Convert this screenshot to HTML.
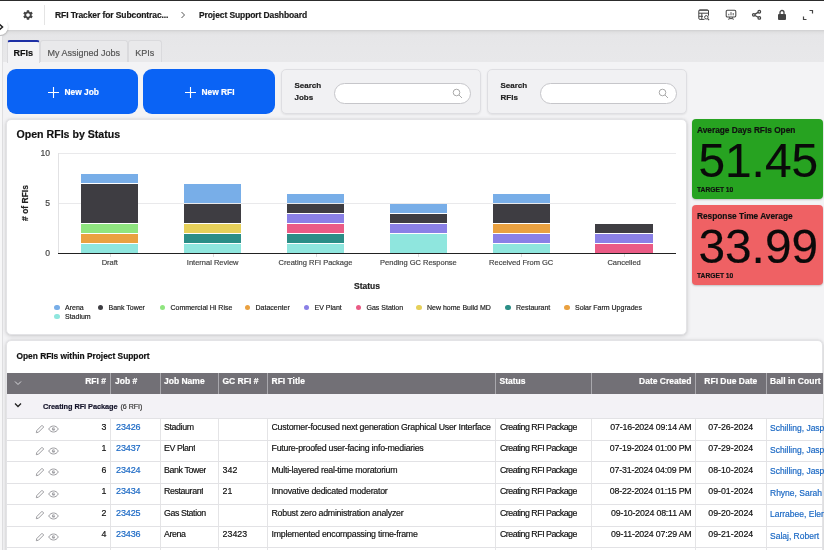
<!DOCTYPE html>
<html><head><meta charset="utf-8">
<style>
*{box-sizing:border-box;margin:0;padding:0}
html,body{width:824px;height:550px;overflow:hidden}
body{will-change:transform;-webkit-font-smoothing:antialiased;-webkit-text-stroke:.18px}
body{font-family:"Liberation Sans",sans-serif;background:#f3f3f5;position:relative;color:#111}
.abs{position:absolute}
#topbar{left:0;top:0;width:824px;height:30px;background:#fff;border-top:1px solid #3a3a3a}
.tb{position:absolute;font-size:8.5px;font-weight:bold;color:#1a1a1a;top:9.5px;white-space:nowrap;letter-spacing:-.1px}
#band{left:0;top:30px;width:824px;height:31.7px;background:linear-gradient(#cfcfd1 0,#dfdfe0 2px,#e6e6e8 5px,#e8e8ea 100%)}
.tab{position:absolute;top:40.3px;height:21.4px;font-size:9px;line-height:24.5px;overflow:hidden;text-align:center;color:#555;background:#e9e9eb;border:1px solid #dadadd;border-bottom:none;border-radius:3px 3px 0 0}
.tab.act{background:#f3f3f5;color:#111;border-top:2px solid #1d2fa5;font-weight:bold;line-height:22.5px;height:23px}
.btn{position:absolute;top:69.4px;height:44.2px;background:#0a63f5;border-radius:9px;color:#fff;font-size:8.4px;font-weight:bold;line-height:45.5px;text-align:left;white-space:nowrap}
.panel{position:absolute;top:69px;height:44.5px;background:#f1f1f3;border:1px solid #dedee2;border-radius:5px;box-shadow:0 1px 2px rgba(0,0,0,.08)}
.panel .lbl{position:absolute;left:13px;top:10px;font-size:8px;font-weight:bold;line-height:12px;color:#222}
.panel .inp{position:absolute;left:52px;top:13px;width:137px;height:21px;border:1px solid #c6c6ca;border-radius:11px;background:#fff}
.card{position:absolute;background:#fff;border:1px solid #e3e3e6;border-radius:5px;box-shadow:0 1px 4px rgba(0,0,0,.17),0 0 2px rgba(0,0,0,.08)}
.kpi{position:absolute;left:692px;width:130.5px;height:80px;border-radius:4px;box-shadow:0 1px 2px rgba(0,0,0,.2)}
.kpi .t{position:absolute;left:5px;top:5.5px;font-size:8.3px;font-weight:bold;color:#111}
.kpi .n{position:absolute;left:1px;width:130.5px;text-align:center;top:14.6px;font-size:47.8px;line-height:54px;color:#0a0a0a;letter-spacing:0}
.kpi .g{position:absolute;left:5px;top:67px;font-size:6.7px;font-weight:bold;color:#111}
.ax{position:absolute;font-size:7.5px;color:#444}
.leg{position:absolute;font-size:7px;color:#222;white-space:nowrap}
.leg i{display:inline-block;width:6px;height:6px;border-radius:50%;margin-right:7px;vertical-align:-0.5px}
table{border-collapse:collapse}
.th{position:absolute;top:372.5px;height:22px;color:#fff;font-size:8.5px;font-weight:bold;line-height:17px;padding:0 4px;white-space:nowrap;overflow:hidden}
.row{position:absolute;left:8px;width:816px;height:22px;font-size:8.8px;color:#111}
.row span{position:absolute;top:0;line-height:21px;white-space:nowrap;overflow:hidden}
a{color:#1a68c4;text-decoration:none}
</style></head><body>
<div id="topbar" class="abs"></div><div class="abs" style="left:0;top:0;width:824px;height:1.4px;background:#2c2c2c"></div>
<div class="abs" style="left:44px;top:5px;width:1px;height:20px;background:#e4e4e4"></div>
<svg class="abs" style="left:21.5px;top:9px" width="12" height="12" viewBox="0 0 24 24"><path fill="#444" d="M19.14 12.94c.04-.3.06-.61.06-.94 0-.32-.02-.64-.07-.94l2.03-1.58a.49.49 0 0 0 .12-.61l-1.92-3.32a.488.488 0 0 0-.59-.22l-2.39.96c-.5-.38-1.03-.7-1.62-.94l-.36-2.54a.484.484 0 0 0-.48-.41h-3.84c-.24 0-.43.17-.47.41l-.36 2.54c-.59.24-1.13.57-1.62.94l-2.39-.96c-.22-.08-.47 0-.59.22L2.74 8.87c-.12.21-.08.47.12.61l2.03 1.58c-.05.3-.09.63-.09.94s.02.64.07.94l-2.03 1.58a.49.49 0 0 0-.12.61l1.92 3.32c.12.22.37.29.59.22l2.39-.96c.5.38 1.03.7 1.62.94l.36 2.54c.05.24.24.41.48.41h3.84c.24 0 .44-.17.47-.41l.36-2.54c.59-.24 1.13-.56 1.62-.94l2.39.96c.22.08.47 0 .59-.22l1.92-3.32c.12-.22.07-.47-.12-.61l-2.01-1.58zM12 15.6c-1.98 0-3.6-1.62-3.6-3.6s1.620-3.6 3.6-3.600 3.6 1.620 3.600 3.600-1.620 3.600-3.600 3.600z"/></svg>
<div class="tb" style="left:55px">RFI Tracker for Subcontrac...</div>
<svg class="abs" style="left:180px;top:11px" width="6" height="8" viewBox="0 0 6 8" fill="none" stroke="#555" stroke-width="1"><path d="M1.500 1l3 3-3 3"/></svg>
<div class="tb" style="left:199px">Project Support Dashboard</div>
<!-- right icons -->
<svg class="abs" style="left:697px;top:8px" width="14" height="14" viewBox="0 0 14 14" fill="none" stroke="#454545" stroke-width="1"><rect x="1.800" y="1.800" width="9.700" height="9.600" rx="1.200"/><path d="M2 2.500h9.300" stroke-width=".8"/><path d="M1.800 5.200h9.700M1.800 8.300h4.200M4.800 5.200v6.200"/><circle cx="9.400" cy="9.400" r="2.600" fill="#fff" stroke="none"/><circle cx="9.300" cy="9.300" r="1.700"/><path d="M10.600 10.600l1.500 1.500" stroke-width="1.200"/></svg>
<svg class="abs" style="left:725px;top:9px" width="12" height="12" viewBox="0 0 12 12" fill="none" stroke="#454545" stroke-width="1.050"><rect x="1.200" y="1.300" width="9.600" height="6.700" rx="1.200"/><path d="M4.700 8.200l-1 2.600M7.300 8.200l1 2.600M4.700 9.600h2.600" stroke-width="1"/><path d="M3.800 6.300v-1.500M6 6.300v-3.200M8.200 6.300v-2.300" stroke-width=".9"/></svg>
<svg class="abs" style="left:751px;top:9px" width="12" height="12" viewBox="0 0 12 12" fill="none" stroke="#454545" stroke-width="1.250"><circle cx="2.800" cy="5.800" r="1.300"/><circle cx="8.300" cy="2.700" r="1.300"/><circle cx="8.300" cy="8.900" r="1.300"/><path d="M4 5.100l3.100-1.700M4 6.500l3.100 1.700"/></svg>
<svg class="abs" style="left:777px;top:9px" width="10" height="12" viewBox="0 0 10 12"><rect x="1" y="5" width="8" height="6" rx="1" fill="#444"/><path d="M3 5V3.500a2 2 0 0 1 4 0V5" fill="none" stroke="#444" stroke-width="1.300"/></svg>
<svg class="abs" style="left:802px;top:9px" width="12" height="12" viewBox="0 0 12 12" fill="none" stroke="#444" stroke-width="1.200"><path d="M7.500 1.500h3v3M4.500 10.500h-3v-3"/></svg>

<div id="band" class="abs"></div>
<div class="abs" style="left:-8px;top:19px;width:16px;height:16px;background:#fff;border-radius:50%;box-shadow:0 1px 2px rgba(0,0,0,.25)"></div>
<div class="abs" style="left:0;top:18px;width:7px;height:12px;background:#fff"></div>
<svg class="abs" style="left:-3px;top:23px" width="7" height="8" viewBox="0 0 7 8" fill="none" stroke="#222" stroke-width="1.500"><path d="M2 1l3.500 3L2 7"/></svg>
<div class="abs" style="left:0;top:36px;width:1.5px;height:520px;background:#f7f7f8"></div><div class="abs" style="left:1.5px;top:36px;width:1px;height:520px;background:#dfdfe1"></div>
<div class="tab act" style="left:6.500px;width:33.5px">RFIs</div>
<div class="tab" style="left:40px;width:87.5px">My Assigned Jobs</div>
<div class="tab" style="left:128px;width:33.5px">KPIs</div>

<div class="btn" style="left:7px;width:131px"><svg class="abs" style="left:41px;top:17.5px" width="11" height="11" viewBox="0 0 11 11" stroke="#fff" stroke-width="1.1"><path d="M5.500 0v11M0 5.500h11"/></svg><span class="abs" style="left:57.500px;top:1px">New Job</span></div>
<div class="btn" style="left:143px;width:132px"><svg class="abs" style="left:41.500px;top:17.5px" width="11" height="11" viewBox="0 0 11 11" stroke="#fff" stroke-width="1.1"><path d="M5.500 0v11M0 5.500h11"/></svg><span class="abs" style="left:58.500px;top:1px">New RFI</span></div>
<div class="panel" style="left:280.500px;width:200px"><div class="lbl">Search<br>Jobs</div><div class="inp"></div>
<svg class="abs" style="left:170px;top:17.5px" width="11" height="11" viewBox="0 0 11 11" fill="none" stroke="#aaa" stroke-width="1"><circle cx="4.500" cy="4.500" r="3.300"/><path d="M7 7l3 3"/></svg></div>
<div class="panel" style="left:486.500px;width:200px"><div class="lbl">Search<br>RFIs</div><div class="inp"></div>
<svg class="abs" style="left:170px;top:17.5px" width="11" height="11" viewBox="0 0 11 11" fill="none" stroke="#aaa" stroke-width="1"><circle cx="4.500" cy="4.500" r="3.300"/><path d="M7 7l3 3"/></svg></div>

<!-- chart card -->
<div class="card" style="left:6px;top:119.3px;width:680.5px;height:215.5px"></div>
<div class="abs" style="left:17px;top:128px;font-size:10.6px;font-weight:bold;color:#111;margin-left:-.5px">Open RFIs by Status</div>
<div id="chart"><div class="abs" style="left:59px;top:153px;width:617px;height:1px;background:#e9e9eb"></div>
<div class="abs" style="left:59px;top:203px;width:617px;height:1px;background:#e9e9eb"></div>
<div class="abs" style="left:58px;top:153px;width:1px;height:100px;background:#e2e2e4"></div>
<div class="abs" style="left:81.17px;top:243.60px;width:57.3px;height:9.00px;background:#8fe6de"></div>
<div class="abs" style="left:81.17px;top:233.60px;width:57.3px;height:9.00px;background:#eaa140"></div>
<div class="abs" style="left:81.17px;top:223.60px;width:57.3px;height:9.00px;background:#8fe57f"></div>
<div class="abs" style="left:81.17px;top:183.60px;width:57.3px;height:39.00px;background:#3e3d42"></div>
<div class="abs" style="left:81.17px;top:173.60px;width:57.3px;height:9.00px;background:#78aee8"></div>
<div class="ax" style="left:49.8px;width:120px;text-align:center;top:258px">Draft</div>
<div class="abs" style="left:109.8px;top:254px;width:1px;height:3px;background:#ddd"></div>
<div class="abs" style="left:184.02px;top:243.60px;width:57.3px;height:9.00px;background:#8fe6de"></div>
<div class="abs" style="left:184.02px;top:233.60px;width:57.3px;height:9.00px;background:#2b8e87"></div>
<div class="abs" style="left:184.02px;top:223.60px;width:57.3px;height:9.00px;background:#e6d05a"></div>
<div class="abs" style="left:184.02px;top:203.60px;width:57.3px;height:19.00px;background:#3e3d42"></div>
<div class="abs" style="left:184.02px;top:183.60px;width:57.3px;height:19.00px;background:#78aee8"></div>
<div class="ax" style="left:152.7px;width:120px;text-align:center;top:258px">Internal Review</div>
<div class="abs" style="left:212.7px;top:254px;width:1px;height:3px;background:#ddd"></div>
<div class="abs" style="left:286.88px;top:243.60px;width:57.3px;height:9.00px;background:#8fe6de"></div>
<div class="abs" style="left:286.88px;top:233.60px;width:57.3px;height:9.00px;background:#2b8e87"></div>
<div class="abs" style="left:286.88px;top:223.60px;width:57.3px;height:9.00px;background:#ea5b85"></div>
<div class="abs" style="left:286.88px;top:213.60px;width:57.3px;height:9.00px;background:#8a80e6"></div>
<div class="abs" style="left:286.88px;top:203.60px;width:57.3px;height:9.00px;background:#3e3d42"></div>
<div class="abs" style="left:286.88px;top:193.60px;width:57.3px;height:9.00px;background:#78aee8"></div>
<div class="ax" style="left:255.5px;width:120px;text-align:center;top:258px">Creating RFI Package</div>
<div class="abs" style="left:315.5px;top:254px;width:1px;height:3px;background:#ddd"></div>
<div class="abs" style="left:389.72px;top:233.60px;width:57.3px;height:19.00px;background:#8fe6de"></div>
<div class="abs" style="left:389.72px;top:223.60px;width:57.3px;height:9.00px;background:#8a80e6"></div>
<div class="abs" style="left:389.72px;top:213.60px;width:57.3px;height:9.00px;background:#3e3d42"></div>
<div class="abs" style="left:389.72px;top:203.60px;width:57.3px;height:9.00px;background:#78aee8"></div>
<div class="ax" style="left:358.4px;width:120px;text-align:center;top:258px">Pending GC Response</div>
<div class="abs" style="left:418.4px;top:254px;width:1px;height:3px;background:#ddd"></div>
<div class="abs" style="left:492.58px;top:243.60px;width:57.3px;height:9.00px;background:#8fe6de"></div>
<div class="abs" style="left:492.58px;top:233.60px;width:57.3px;height:9.00px;background:#8a80e6"></div>
<div class="abs" style="left:492.58px;top:223.60px;width:57.3px;height:9.00px;background:#eaa140"></div>
<div class="abs" style="left:492.58px;top:203.60px;width:57.3px;height:19.00px;background:#3e3d42"></div>
<div class="abs" style="left:492.58px;top:193.60px;width:57.3px;height:9.00px;background:#78aee8"></div>
<div class="ax" style="left:461.2px;width:120px;text-align:center;top:258px">Received From GC</div>
<div class="abs" style="left:521.2px;top:254px;width:1px;height:3px;background:#ddd"></div>
<div class="abs" style="left:595.42px;top:243.60px;width:57.3px;height:9.00px;background:#ea5b85"></div>
<div class="abs" style="left:595.42px;top:233.60px;width:57.3px;height:9.00px;background:#8a80e6"></div>
<div class="abs" style="left:595.42px;top:223.60px;width:57.3px;height:9.00px;background:#3e3d42"></div>
<div class="ax" style="left:564.1px;width:120px;text-align:center;top:258px">Cancelled</div>
<div class="abs" style="left:624.1px;top:254px;width:1px;height:3px;background:#ddd"></div>
<div class="abs" style="left:58px;top:252.5px;width:618px;height:1.5px;background:#222"></div>
<div class="ax" style="left:30px;width:20px;text-align:right;top:147.5px;font-size:8.6px">10</div>
<div class="ax" style="left:30px;width:20px;text-align:right;top:197.5px;font-size:8.6px">5</div>
<div class="ax" style="left:30px;width:20px;text-align:right;top:247.5px;font-size:8.6px">0</div>
<div class="abs" style="left:337px;width:60px;text-align:center;top:281px;font-size:8.5px;font-weight:bold;color:#222">Status</div>
<div class="abs" style="left:0px;top:198px;width:50px;text-align:center;font-size:8.5px;font-weight:bold;color:#222;transform:rotate(-90deg);transform-origin:25px 5px">#&nbsp;of&nbsp;RFIs</div>
<div class="abs" style="left:54.4px;top:304.5px;width:5.2px;height:5.2px;border-radius:50%;background:#78aee8"></div><div class="leg" style="left:65px;top:303.5px">Arena</div>
<div class="abs" style="left:97.9px;top:304.5px;width:5.2px;height:5.2px;border-radius:50%;background:#3e3d42"></div><div class="leg" style="left:108.5px;top:303.5px">Bank Tower</div>
<div class="abs" style="left:159.9px;top:304.5px;width:5.2px;height:5.2px;border-radius:50%;background:#8fe57f"></div><div class="leg" style="left:170.5px;top:303.5px">Commercial Hi Rise</div>
<div class="abs" style="left:244.9px;top:304.5px;width:5.2px;height:5.2px;border-radius:50%;background:#eaa140"></div><div class="leg" style="left:255.5px;top:303.5px">Datacenter</div>
<div class="abs" style="left:303.9px;top:304.5px;width:5.2px;height:5.2px;border-radius:50%;background:#8a80e6"></div><div class="leg" style="left:314.5px;top:303.5px">EV Plant</div>
<div class="abs" style="left:355.9px;top:304.5px;width:5.2px;height:5.2px;border-radius:50%;background:#ea5b85"></div><div class="leg" style="left:366.5px;top:303.5px">Gas Station</div>
<div class="abs" style="left:416.4px;top:304.5px;width:5.2px;height:5.2px;border-radius:50%;background:#e6d05a"></div><div class="leg" style="left:427px;top:303.5px">New home Build MD</div>
<div class="abs" style="left:505.4px;top:304.5px;width:5.2px;height:5.2px;border-radius:50%;background:#2b8e87"></div><div class="leg" style="left:516px;top:303.5px">Restaurant</div>
<div class="abs" style="left:564.4px;top:304.5px;width:5.2px;height:5.2px;border-radius:50%;background:#eaa140"></div><div class="leg" style="left:575px;top:303.5px">Solar Farm Upgrades</div>
<div class="abs" style="left:54.4px;top:314px;width:5.2px;height:5.2px;border-radius:50%;background:#8fe6de"></div><div class="leg" style="left:65px;top:313px">Stadium</div></div><!--/chart-->

<!-- KPI -->
<div class="kpi" style="top:119px;height:80px;background:#27a321"><div class="t">Average Days RFIs Open</div><div class="n">51.45</div><div class="g">TARGET 10</div></div>
<div class="kpi" style="top:205px;height:80px;background:#ef6164"><div class="t">Response Time Average</div><div class="n">33.99</div><div class="g">TARGET 10</div></div>

<!-- table card -->
<div class="card" style="left:6px;top:340px;width:817px;height:216px"></div>
<div class="abs" style="left:17px;top:351px;font-size:8.35px;font-weight:bold;color:#111;margin-left:-.5px">Open RFIs within Project Support</div>
<div id="tbl"><div class="abs" style="left:7px;top:372.5px;width:816px;height:21.8px;background:#727076"></div>
<div class="th" style="left:8px;width:102px;text-align:right;padding-left:4px">RFI #</div>
<div class="th" style="left:110px;width:50px;text-align:left;padding-left:5px">Job #</div>
<div class="th" style="left:160px;width:58.5px;text-align:left;padding-left:4px">Job Name</div>
<div class="th" style="left:218.5px;width:49.0px;text-align:left;padding-left:4px">GC RFI #</div>
<div class="th" style="left:267.5px;width:228.0px;text-align:left;padding-left:4px">RFI Title</div>
<div class="th" style="left:495.5px;width:96.0px;text-align:left;padding-left:4px">Status</div>
<div class="th" style="left:591.5px;width:104.0px;text-align:right;padding-left:4px">Date Created</div>
<div class="th" style="left:695.5px;width:70.5px;text-align:center;padding-left:4px">RFI Due Date</div>
<div class="th" style="left:766px;width:58px;text-align:left;padding-left:4px">Ball in Court</div>
<div class="abs" style="left:109.5px;top:372.5px;width:1px;height:21.8px;background:#a9a8ad"></div>
<div class="abs" style="left:159.5px;top:372.5px;width:1px;height:21.8px;background:#a9a8ad"></div>
<div class="abs" style="left:218.0px;top:372.5px;width:1px;height:21.8px;background:#a9a8ad"></div>
<div class="abs" style="left:267.0px;top:372.5px;width:1px;height:21.8px;background:#a9a8ad"></div>
<div class="abs" style="left:495.0px;top:372.5px;width:1px;height:21.8px;background:#a9a8ad"></div>
<div class="abs" style="left:591.0px;top:372.5px;width:1px;height:21.8px;background:#a9a8ad"></div>
<div class="abs" style="left:695.0px;top:372.5px;width:1px;height:21.8px;background:#a9a8ad"></div>
<div class="abs" style="left:765.5px;top:372.5px;width:1px;height:21.8px;background:#a9a8ad"></div>
<svg class="abs" style="left:14px;top:380px" width="8" height="6" viewBox="0 0 8 6" fill="none" stroke="#d8d8dc" stroke-width="1"><path d="M1 1.500l3 3 3-3"/></svg>
<div class="abs" style="left:7px;top:394.3px;width:816px;height:24.2px;background:#f3f2f6"></div>
<svg class="abs" style="left:14.200px;top:401.5px" width="8" height="6" viewBox="0 0 8 6" fill="none" stroke="#222" stroke-width="1.300"><path d="M1 1.500l3 3 3-3"/></svg>
<div class="abs" style="left:43px;top:402px;font-size:7.35px;font-weight:bold;color:#14142a;white-space:nowrap;letter-spacing:-.05px">Creating RFI Package<span style="font-weight:normal;font-size:7.1px;margin-left:3px;color:#333">(6 RFI)</span></div>
<div class="abs" style="left:109.5px;top:418.5px;width:1px;height:140px;background:#e4e4e6"></div>
<div class="abs" style="left:159.5px;top:418.5px;width:1px;height:140px;background:#e4e4e6"></div>
<div class="abs" style="left:218.0px;top:418.5px;width:1px;height:140px;background:#e4e4e6"></div>
<div class="abs" style="left:267.0px;top:418.5px;width:1px;height:140px;background:#e4e4e6"></div>
<div class="abs" style="left:495.0px;top:418.5px;width:1px;height:140px;background:#e4e4e6"></div>
<div class="abs" style="left:591.0px;top:418.5px;width:1px;height:140px;background:#e4e4e6"></div>
<div class="abs" style="left:695.0px;top:418.5px;width:1px;height:140px;background:#e4e4e6"></div>
<div class="abs" style="left:765.5px;top:418.5px;width:1px;height:140px;background:#e4e4e6"></div>
<div class="abs" style="left:7px;top:418.0px;width:816px;height:1px;background:#e2e2e5"></div>
<svg class="abs" style="left:35px;top:424.2px" width="10" height="10" viewBox="0 0 10 10" fill="none" stroke="#9c9ca0" stroke-width="1"><path d="M1.300 8.700l.5-2.200 5.200-5.200 1.700 1.700-5.200 5.200z"/></svg><svg class="abs" style="left:48px;top:425.3px" width="11" height="8" viewBox="0 0 11 8" fill="none" stroke="#9c9ca0" stroke-width="1"><path d="M.7 4C2 1.800 3.700 1 5.500 1s3.500.8 4.800 3C9 6.200 7.300 7 5.500 7S2 6.200.7 4z"/><circle cx="5.500" cy="4" r="1.700" fill="#a6a6aa" stroke="none"/><circle cx="6" cy="3.500" r=".6" fill="#fff" stroke="none"/></svg>
<div class="row" style="top:416.5px"><span style="left:60px;width:38.5px;text-align:right">3</span><span style="left:108px;font-size:9px;letter-spacing:-.1px"><a>23426</a></span><span style="left:156px;letter-spacing:-.38px">Stadium</span><span style="left:214.500px;letter-spacing:.05px"></span><span style="left:263.500px;width:226px;letter-spacing:-.24px">Customer-focused next generation Graphical User Interface</span><span style="left:492px;letter-spacing:-.48px">Creating RFI Package</span><span style="left:590px;width:93.500px;text-align:right;letter-spacing:-.18px">07-16-2024 09:14 AM</span><span style="left:687.500px;width:70.5px;text-align:center;letter-spacing:0px">07-26-2024</span><span style="left:762px;top:1.5px;width:54px;font-size:8.5px"><a>Schilling, Jasper</a></span></div>
<div class="abs" style="left:7px;top:439.5px;width:816px;height:1px;background:#e2e2e5"></div>
<svg class="abs" style="left:35px;top:445.8px" width="10" height="10" viewBox="0 0 10 10" fill="none" stroke="#9c9ca0" stroke-width="1"><path d="M1.300 8.700l.5-2.200 5.200-5.200 1.700 1.700-5.200 5.200z"/></svg><svg class="abs" style="left:48px;top:446.9px" width="11" height="8" viewBox="0 0 11 8" fill="none" stroke="#9c9ca0" stroke-width="1"><path d="M.7 4C2 1.800 3.700 1 5.500 1s3.500.8 4.800 3C9 6.200 7.300 7 5.500 7S2 6.200.7 4z"/><circle cx="5.500" cy="4" r="1.700" fill="#a6a6aa" stroke="none"/><circle cx="6" cy="3.500" r=".6" fill="#fff" stroke="none"/></svg>
<div class="row" style="top:438.0px"><span style="left:60px;width:38.5px;text-align:right">1</span><span style="left:108px;font-size:9px;letter-spacing:-.1px"><a>23437</a></span><span style="left:156px;letter-spacing:-.38px">EV Plant</span><span style="left:214.500px;letter-spacing:.05px"></span><span style="left:263.500px;width:226px;letter-spacing:-.24px">Future-proofed user-facing info-mediaries</span><span style="left:492px;letter-spacing:-.48px">Creating RFI Package</span><span style="left:590px;width:93.500px;text-align:right;letter-spacing:-.18px">07-19-2024 01:00 PM</span><span style="left:687.500px;width:70.5px;text-align:center;letter-spacing:0px">07-29-2024</span><span style="left:762px;top:1.5px;width:54px;font-size:8.5px"><a>Schilling, Jasper</a></span></div>
<div class="abs" style="left:7px;top:461.0px;width:816px;height:1px;background:#e2e2e5"></div>
<svg class="abs" style="left:35px;top:467.3px" width="10" height="10" viewBox="0 0 10 10" fill="none" stroke="#9c9ca0" stroke-width="1"><path d="M1.300 8.700l.5-2.200 5.200-5.200 1.700 1.700-5.200 5.200z"/></svg><svg class="abs" style="left:48px;top:468.4px" width="11" height="8" viewBox="0 0 11 8" fill="none" stroke="#9c9ca0" stroke-width="1"><path d="M.7 4C2 1.800 3.700 1 5.500 1s3.500.8 4.800 3C9 6.200 7.300 7 5.500 7S2 6.200.7 4z"/><circle cx="5.500" cy="4" r="1.700" fill="#a6a6aa" stroke="none"/><circle cx="6" cy="3.500" r=".6" fill="#fff" stroke="none"/></svg>
<div class="row" style="top:459.5px"><span style="left:60px;width:38.5px;text-align:right">6</span><span style="left:108px;font-size:9px;letter-spacing:-.1px"><a>23424</a></span><span style="left:156px;letter-spacing:-.38px">Bank Tower</span><span style="left:214.500px;letter-spacing:.05px">342</span><span style="left:263.500px;width:226px;letter-spacing:-.24px">Multi-layered real-time moratorium</span><span style="left:492px;letter-spacing:-.48px">Creating RFI Package</span><span style="left:590px;width:93.500px;text-align:right;letter-spacing:-.18px">07-31-2024 04:09 PM</span><span style="left:687.500px;width:70.5px;text-align:center;letter-spacing:0px">08-10-2024</span><span style="left:762px;top:1.5px;width:54px;font-size:8.5px"><a>Schilling, Jasper</a></span></div>
<div class="abs" style="left:7px;top:482.5px;width:816px;height:1px;background:#e2e2e5"></div>
<svg class="abs" style="left:35px;top:488.9px" width="10" height="10" viewBox="0 0 10 10" fill="none" stroke="#9c9ca0" stroke-width="1"><path d="M1.300 8.700l.5-2.200 5.200-5.200 1.700 1.700-5.200 5.200z"/></svg><svg class="abs" style="left:48px;top:490.0px" width="11" height="8" viewBox="0 0 11 8" fill="none" stroke="#9c9ca0" stroke-width="1"><path d="M.7 4C2 1.800 3.700 1 5.500 1s3.500.8 4.800 3C9 6.200 7.300 7 5.500 7S2 6.200.7 4z"/><circle cx="5.500" cy="4" r="1.700" fill="#a6a6aa" stroke="none"/><circle cx="6" cy="3.500" r=".6" fill="#fff" stroke="none"/></svg>
<div class="row" style="top:481.0px"><span style="left:60px;width:38.5px;text-align:right">1</span><span style="left:108px;font-size:9px;letter-spacing:-.1px"><a>23434</a></span><span style="left:156px;letter-spacing:-.38px">Restaurant</span><span style="left:214.500px;letter-spacing:.05px">21</span><span style="left:263.500px;width:226px;letter-spacing:-.24px">Innovative dedicated moderator</span><span style="left:492px;letter-spacing:-.48px">Creating RFI Package</span><span style="left:590px;width:93.500px;text-align:right;letter-spacing:-.18px">08-22-2024 01:15 PM</span><span style="left:687.500px;width:70.5px;text-align:center;letter-spacing:0px">09-01-2024</span><span style="left:762px;top:1.5px;width:54px;font-size:8.5px"><a>Rhyne, Sarah</a></span></div>
<div class="abs" style="left:7px;top:504.0px;width:816px;height:1px;background:#e2e2e5"></div>
<svg class="abs" style="left:35px;top:510.4px" width="10" height="10" viewBox="0 0 10 10" fill="none" stroke="#9c9ca0" stroke-width="1"><path d="M1.300 8.700l.5-2.200 5.200-5.200 1.700 1.700-5.200 5.200z"/></svg><svg class="abs" style="left:48px;top:511.5px" width="11" height="8" viewBox="0 0 11 8" fill="none" stroke="#9c9ca0" stroke-width="1"><path d="M.7 4C2 1.800 3.700 1 5.500 1s3.500.8 4.800 3C9 6.200 7.300 7 5.500 7S2 6.200.7 4z"/><circle cx="5.500" cy="4" r="1.700" fill="#a6a6aa" stroke="none"/><circle cx="6" cy="3.500" r=".6" fill="#fff" stroke="none"/></svg>
<div class="row" style="top:502.5px"><span style="left:60px;width:38.5px;text-align:right">2</span><span style="left:108px;font-size:9px;letter-spacing:-.1px"><a>23425</a></span><span style="left:156px;letter-spacing:-.38px">Gas Station</span><span style="left:214.500px;letter-spacing:.05px"></span><span style="left:263.500px;width:226px;letter-spacing:-.24px">Robust zero administration analyzer</span><span style="left:492px;letter-spacing:-.48px">Creating RFI Package</span><span style="left:590px;width:93.500px;text-align:right;letter-spacing:-.18px">09-10-2024 08:11 AM</span><span style="left:687.500px;width:70.5px;text-align:center;letter-spacing:0px">09-20-2024</span><span style="left:762px;top:1.5px;width:54px;font-size:8.5px"><a>Larrabee, Eleno</a></span></div>
<div class="abs" style="left:7px;top:525.5px;width:816px;height:1px;background:#e2e2e5"></div>
<svg class="abs" style="left:35px;top:532.0px" width="10" height="10" viewBox="0 0 10 10" fill="none" stroke="#9c9ca0" stroke-width="1"><path d="M1.300 8.700l.5-2.200 5.200-5.200 1.700 1.700-5.200 5.200z"/></svg><svg class="abs" style="left:48px;top:533.0px" width="11" height="8" viewBox="0 0 11 8" fill="none" stroke="#9c9ca0" stroke-width="1"><path d="M.7 4C2 1.800 3.700 1 5.500 1s3.500.8 4.800 3C9 6.200 7.300 7 5.500 7S2 6.200.7 4z"/><circle cx="5.500" cy="4" r="1.700" fill="#a6a6aa" stroke="none"/><circle cx="6" cy="3.500" r=".6" fill="#fff" stroke="none"/></svg>
<div class="row" style="top:524.0px"><span style="left:60px;width:38.5px;text-align:right">4</span><span style="left:108px;font-size:9px;letter-spacing:-.1px"><a>23436</a></span><span style="left:156px;letter-spacing:-.38px">Arena</span><span style="left:214.500px;letter-spacing:.05px">23423</span><span style="left:263.500px;width:226px;letter-spacing:-.24px">Implemented encompassing time-frame</span><span style="left:492px;letter-spacing:-.48px">Creating RFI Package</span><span style="left:590px;width:93.500px;text-align:right;letter-spacing:-.18px">09-11-2024 07:29 AM</span><span style="left:687.500px;width:70.5px;text-align:center;letter-spacing:0px">09-21-2024</span><span style="left:762px;top:1.5px;width:54px;font-size:8.5px"><a>Salaj, Robert</a></span></div>
<div class="abs" style="left:7px;top:547px;width:816px;height:1px;background:#e2e2e5"></div></div><!--/tbl-->
</body></html>
